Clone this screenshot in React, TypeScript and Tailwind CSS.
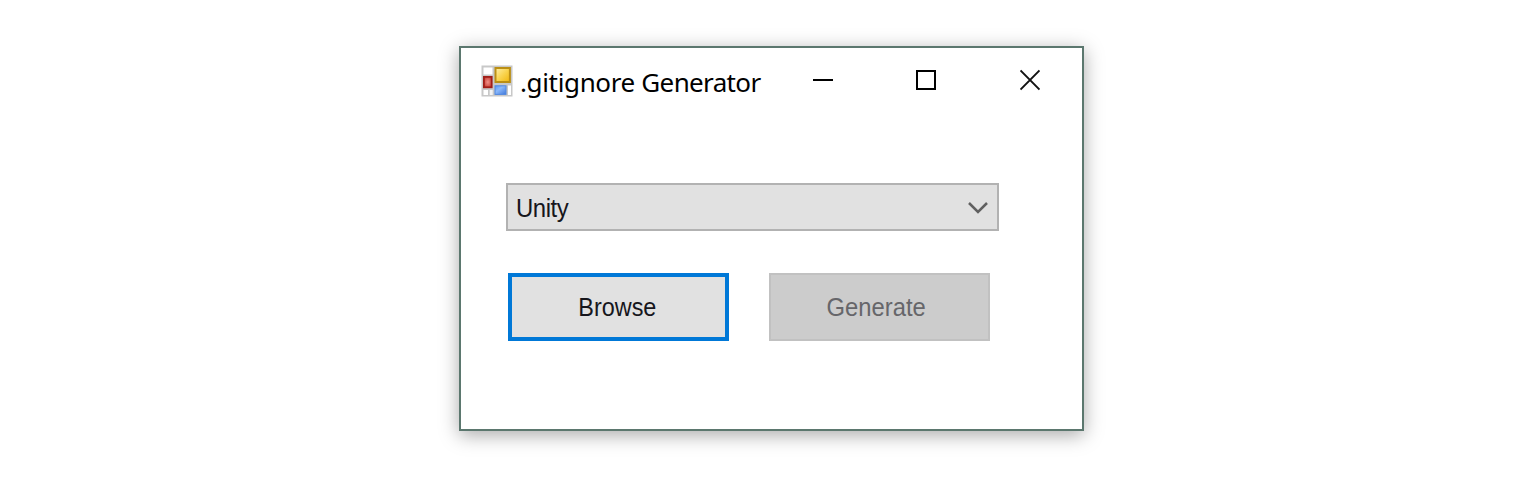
import React from "react";

function AppIcon() {
  return (
    <svg width="32" height="32" viewBox="0 0 32 32" className="block shrink-0">
      <defs>
        <linearGradient id="gold" x1="0" y1="0" x2="1" y2="1">
          <stop offset="0" stopColor="#fff0a8" />
          <stop offset="0.5" stopColor="#f9d450" />
          <stop offset="1" stopColor="#f0b60c" />
        </linearGradient>
        <radialGradient id="red" cx="50%" cy="50%" r="60%">
          <stop offset="0" stopColor="#f09088" />
          <stop offset="1" stopColor="#c63a30" />
        </radialGradient>
        <linearGradient id="blue" x1="0" y1="0" x2="1" y2="1">
          <stop offset="0" stopColor="#5c98f0" />
          <stop offset="0.4" stopColor="#8ab8fb" />
          <stop offset="1" stopColor="#4078da" />
        </linearGradient>
      </defs>
      <rect x="0.5" y="0.5" width="31" height="31" fill="#c8c8c8" />
      <rect x="2.5" y="2.5" width="9" height="7" fill="#fff" />
      <rect x="2.5" y="25" width="4.5" height="5" fill="#fff" />
      <rect x="8.7" y="25" width="3" height="5" fill="#f4f4f4" />
      <rect x="27" y="20.5" width="3" height="9.5" fill="#fff" />
      <rect x="2.9" y="11.9" width="7.8" height="10.4" fill="url(#red)" stroke="#a01e18" strokeWidth="1.8" />
      <rect x="14.5" y="3" width="14.4" height="14" fill="url(#gold)" stroke="#bb8f14" strokeWidth="2" />
      <rect x="14" y="20.8" width="11" height="8.6" fill="url(#blue)" stroke="#5088e0" strokeWidth="1" />
    </svg>
  );
}

function TitleBar() {
  return (
    <header className="flex h-[66px] pl-5 pt-[17px]">
      <AppIcon />
      <h1 className="-mt-px ml-[7px] w-[293px] whitespace-nowrap font-['Noto_Sans','Open_Sans',sans-serif] text-[26px] leading-[36px] tracking-[-0.35px] text-black">
        .gitignore <span className="tracking-[-0.65px]">Generator</span>
      </h1>
      <button aria-label="Minimize" className="h-8 w-5">
        <svg width="20" height="32" className="block"><path d="M0 15H20" stroke="#000" strokeWidth="2" /></svg>
      </button>
      <button aria-label="Maximize" className="ml-[83px] h-8 w-5">
        <svg width="20" height="32" className="block"><rect x="1" y="6" width="18" height="18" fill="none" stroke="#000" strokeWidth="2" /></svg>
      </button>
      <button aria-label="Close" className="ml-[84px] h-8 w-5">
        <svg width="20" height="32" className="block"><path d="M.5 5.5L19.5 24.5M19.5 5.5L.5 24.5" stroke="#111" strokeWidth="1.9" /></svg>
      </button>
    </header>
  );
}

export default function App() {
  return (
    <main className="h-[481px] w-full bg-white pl-[459px] pt-[46px] font-['Liberation_Sans',Arial,sans-serif]">
      <section className="h-[385px] w-[625px] border-2 border-[#5b776e] bg-white shadow-[0_4px_18px_rgba(0,0,0,0.34)]">
        <TitleBar />
        <div className="pl-[45px] pt-[69px]">
          <button className="flex h-[48px] w-[493px] items-center justify-between border-2 border-[#b2b2b2] bg-[#e1e1e1] pl-2 pr-[9px]">
            <span className="mt-[2px] origin-left scale-x-[0.92] text-[26px] leading-8 tracking-[-0.5px] text-[#16161c]">Unity</span>
            <svg width="20" height="12" viewBox="0 0 20 12" className="mt-px">
              <path d="M1 1L10 10L19 1" fill="none" stroke="#606060" strokeWidth="2.5" />
            </svg>
          </button>
          <div className="mt-[42px] flex gap-10 pl-[2px]">
            <button className="flex h-[68px] w-[221px] items-center justify-center border-4 border-[#0078d7] bg-[#e1e1e1] pr-[3px]">
              <span className="scale-x-[0.9] text-[26px] leading-8 text-[#16161c]">Browse</span>
            </button>
            <button className="flex h-[68px] w-[221px] items-center justify-center border-2 border-[#c1c1c1] bg-[#cccccc] pr-[7px]">
              <span className="scale-x-[0.915] text-[26px] leading-8 text-[#66666a]">Generate</span>
            </button>
          </div>
        </div>
      </section>
    </main>
  );
}
